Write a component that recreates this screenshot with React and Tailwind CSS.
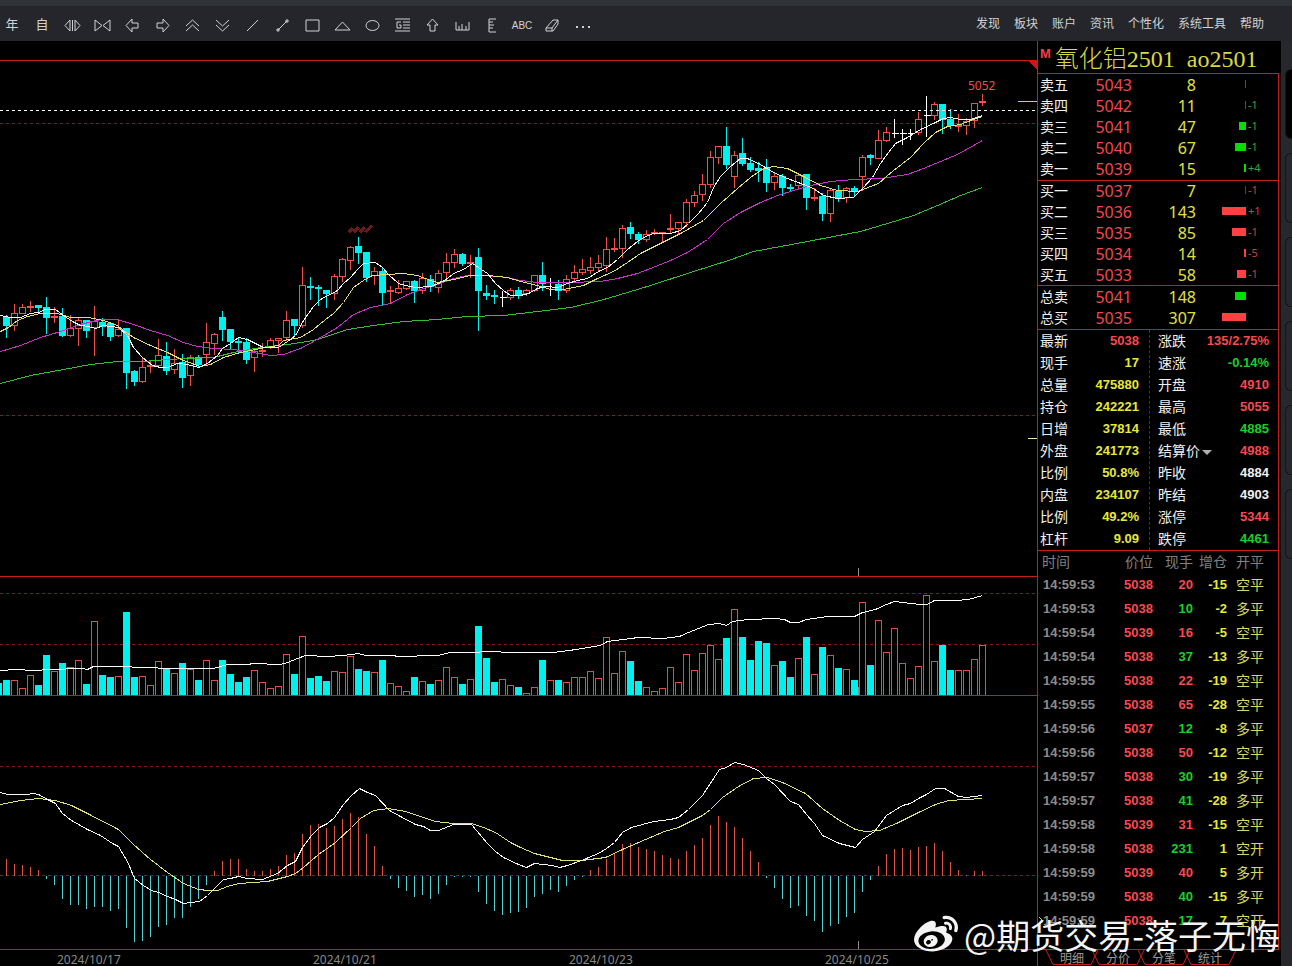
import React from 'react';
import { FaWeibo } from 'react-icons/fa';

// [kind, high, bodyTop, bodyBottom, low, volumeTop, macdEnd]
// kind: u = up (hollow), d = down (filled), w = flat (cross)
const BARS = [
  ['d', 314, 317, 325, 337, 680, 858], ['u', 303, 313, 325, 330, 680, 863],
  ['u', 303, 307, 313, 313, 688, 864], ['u', 300, 306, 307, 311, 675, 866],
  ['d', 304, 305, 307, 312, 685, 869], ['d', 296, 307, 317, 333, 655, 878],
  ['u', 306, 316, 317, 322, 671, 884], ['d', 307, 316, 335, 336, 663, 898],
  ['u', 314, 328, 335, 336, 667, 904], ['u', 317, 320, 328, 345, 660, 904],
  ['d', 320, 320, 330, 337, 684, 908], ['u', 305, 321, 327, 355, 621, 906],
  ['d', 317, 322, 326, 335, 675, 906], ['d', 322, 323, 336, 340, 677, 910],
  ['u', 318, 329, 335, 336, 676, 908], ['d', 327, 328, 372, 388, 612, 927],
  ['d', 369, 371, 381, 385, 677, 941], ['u', 357, 367, 381, 382, 676, 940],
  ['u', 360, 365, 366, 372, 685, 936], ['u', 338, 355, 365, 367, 661, 926],
  ['d', 341, 356, 370, 374, 668, 924], ['u', 348, 363, 369, 373, 673, 917],
  ['d', 353, 362, 377, 387, 663, 917], ['u', 354, 357, 375, 385, 669, 906],
  ['d', 354, 357, 364, 367, 680, 898], ['u', 322, 342, 354, 365, 660, 884],
  ['u', 332, 334, 343, 354, 680, 870], ['d', 310, 317, 329, 340, 660, 860],
  ['d', 329, 329, 341, 349, 674, 858], ['d', 337, 341, 342, 353, 682, 858],
  ['d', 337, 342, 359, 363, 677, 868], ['u', 349, 351, 357, 371, 670, 870],
  ['u', 342, 350, 351, 356, 682, 870], ['u', 337, 340, 347, 348, 688, 868],
  ['u', 337, 338, 340, 352, 686, 865], ['u', 310, 320, 337, 340, 654, 854],
  ['d', 319, 319, 325, 335, 674, 852], ['u', 266, 285, 325, 327, 636, 833],
  ['d', 276, 286, 287, 299, 678, 824], ['d', 284, 287, 288, 305, 676, 823],
  ['d', 289, 290, 293, 307, 681, 827], ['u', 273, 276, 293, 299, 671, 825],
  ['u', 257, 259, 276, 281, 672, 818], ['u', 245, 247, 260, 269, 656, 812],
  ['d', 236, 246, 252, 263, 669, 816], ['d', 252, 252, 277, 281, 671, 833],
  ['u', 266, 271, 275, 284, 672, 845], ['d', 267, 271, 292, 305, 660, 865],
  ['u', 285, 290, 291, 302, 683, 878], ['u', 279, 288, 292, 293, 686, 887],
  ['u', 281, 281, 288, 289, 691, 890], ['d', 279, 281, 290, 302, 677, 896],
  ['u', 272, 278, 290, 293, 681, 894], ['d', 274, 279, 286, 291, 684, 898],
  ['u', 269, 273, 287, 292, 680, 893], ['u', 252, 262, 272, 277, 667, 884],
  ['u', 248, 254, 262, 267, 677, 876], ['d', 252, 254, 263, 265, 684, 876],
  ['u', 254, 262, 263, 277, 679, 876], ['d', 247, 257, 290, 330, 626, 891],
  ['d', 284, 293, 295, 299, 658, 903], ['d', 289, 295, 296, 303, 682, 910],
  ['w', 290, 297, 297, 306, 679, 914], ['u', 287, 290, 297, 299, 685, 912],
  ['d', 286, 290, 294, 298, 687, 911], ['u', 288, 290, 293, 295, 693, 907],
  ['u', 275, 275, 290, 291, 687, 896], ['d', 261, 275, 283, 290, 660, 893],
  ['w', 277, 282, 282, 295, 680, 889], ['d', 279, 284, 290, 299, 680, 891],
  ['u', 274, 279, 290, 292, 682, 885], ['u', 264, 272, 278, 282, 677, 879],
  ['u', 258, 269, 272, 274, 677, 876], ['u', 256, 267, 270, 273, 671, 869],
  ['u', 254, 263, 267, 271, 678, 866], ['u', 236, 249, 265, 271, 637, 858],
  ['u', 237, 248, 249, 251, 673, 853], ['u', 224, 228, 248, 257, 651, 843],
  ['d', 221, 227, 233, 238, 661, 842], ['d', 231, 234, 239, 243, 681, 846],
  ['u', 229, 234, 239, 241, 687, 848], ['u', 228, 232, 233, 234, 691, 850],
  ['u', 232, 232, 233, 242, 688, 854], ['u', 213, 228, 229, 233, 667, 857],
  ['u', 221, 222, 228, 234, 682, 858], ['u', 198, 202, 222, 226, 654, 850],
  ['u', 190, 195, 202, 206, 670, 844], ['u', 173, 184, 194, 200, 653, 837],
  ['u', 150, 157, 184, 187, 645, 824], ['u', 145, 146, 157, 163, 659, 815],
  ['d', 126, 146, 164, 168, 638, 821], ['u', 150, 155, 176, 187, 609, 826],
  ['d', 137, 153, 163, 165, 637, 837], ['d', 156, 163, 169, 171, 660, 850],
  ['d', 161, 168, 170, 181, 641, 861], ['d', 158, 168, 182, 191, 643, 877],
  ['u', 172, 176, 182, 189, 665, 887], ['d', 173, 176, 187, 195, 661, 898],
  ['d', 183, 187, 188, 191, 677, 907], ['u', 172, 175, 185, 187, 658, 905],
  ['d', 174, 174, 197, 209, 637, 915], ['u', 187, 197, 198, 200, 674, 920],
  ['d', 192, 196, 213, 220, 647, 931], ['u', 187, 190, 213, 221, 655, 925],
  ['d', 184, 191, 198, 201, 668, 923], ['u', 186, 188, 197, 202, 669, 916],
  ['d', 185, 188, 191, 196, 680, 912], ['u', 154, 157, 176, 190, 602, 891],
  ['d', 153, 155, 157, 164, 665, 879], ['u', 129, 140, 158, 158, 620, 865],
  ['u', 126, 132, 140, 141, 652, 853], ['w', 118, 133, 133, 137, 628, 848],
  ['w', 128, 133, 133, 144, 663, 847], ['w', 128, 133, 133, 139, 678, 849],
  ['u', 111, 119, 132, 134, 666, 846], ['w', 95, 115, 115, 136, 595, 845],
  ['u', 101, 104, 115, 119, 661, 842], ['d', 103, 104, 119, 133, 645, 850],
  ['d', 108, 119, 125, 128, 670, 861], ['u', 113, 125, 126, 131, 670, 869],
  ['u', 117, 121, 125, 134, 670, 874], ['u', 102, 103, 120, 127, 659, 870],
  ['u', 93, 101, 102, 105, 645, 870],
];

const MA5 = '0,315 10,317 20,317 30,313 38,312 45,309 55,309 63,315 72,321 80,325 88,326 95,328 103,325 118,327 127,335 133,347 142,357 152,365 160,367 167,367 177,363 187,364 198,367 207,363 217,355 222,348 230,343 238,337 247,339 255,343 263,347 278,347 287,341 295,335 303,320 313,306 320,299 337,290 343,283 350,277 357,269 363,263 375,262 382,267 388,274 398,283 405,285 415,287 430,286 438,283 447,278 453,273 463,269 472,263 478,267 487,273 495,283 503,290 510,295 520,295 528,293 537,288 545,286 557,287 567,283 577,280 587,278 598,271 607,267 617,259 627,249 637,241 643,237 653,233 670,233 680,230 688,223 698,213 707,202 713,187 720,176 730,166 740,158 747,158 760,164 773,172 787,178 803,184 813,188 823,195 837,198 853,197 862,188 872,177 880,163 888,152 895,143 907,137 920,129 933,123 943,118 950,117 960,119 970,119 982,115';
const MA10 = '0,331 8,327 17,320 27,316 40,313 57,313 70,317 88,317 103,320 117,325 123,330 133,337 150,345 167,352 183,360 200,366 210,364 223,357 240,352 260,348 278,345 283,340 300,337 313,329 320,323 333,313 343,302 353,287 363,280 372,275 387,274 403,273 417,275 430,280 437,282 453,279 470,275 487,275 507,277 520,281 537,285 550,289 563,289 583,285 597,278 613,271 627,262 640,253 660,243 680,233 703,220 720,203 737,188 750,177 763,168 773,166 787,168 803,176 820,185 837,190 857,191 878,183 893,170 910,157 923,143 935,132 947,126 960,124 973,119 982,116';
const MA20 = '0,351 20,345 40,337 60,331 80,324 100,319 117,319 133,324 150,330 167,335 183,342 197,346 213,348 233,349 253,352 270,355 283,354 300,348 313,341 320,337 337,327 353,314 370,307 390,303 407,294 423,288 440,283 453,278 467,275 483,275 507,277 520,280 537,282 567,282 600,281 617,278 637,273 650,268 670,260 687,252 707,239 723,223 740,212 760,202 777,195 793,190 810,185 830,181 853,179 880,178 907,174 923,168 940,161 957,154 982,140';
const MA60 = '0,383 30,375 63,369 90,364 117,361 143,361 167,359 187,358 213,357 233,352 260,347 287,344 313,340 320,338 347,329 373,325 403,321 437,319 467,316 503,315 537,311 570,307 600,300 627,292 650,285 690,272 728,260 753,251 780,246 807,241 833,236 860,231 887,223 913,215 937,205 960,195 982,187';
const OPEN_INTEREST = '0,670 15,669 33,670 50,669 82,668 87,669 93,666 130,666 133,667 157,667 158,668 213,668 220,666 227,664 247,664 253,663 280,664 287,662 297,658 305,655 327,656 343,655 358,653 365,655 393,655 397,656 413,656 420,655 437,655 450,652 467,652 493,651 507,652 552,652 569,650 600,645 607,641 638,637 662,638 679,636 688,632 708,624 719,623 726,625 732,621 748,619 775,618 784,619 790,622 798,622 806,619 827,616 854,616 862,612 875,609 886,604 894,601 911,603 920,604 927,604 934,600 955,600 968,599 982,595';
const DIF = '0,792 7,794 27,794 32,793 38,794 47,799 55,803 62,813 71,820 78,824 87,829 100,835 112,843 118,846 127,861 134,878 143,885 151,890 158,892 167,896 175,899 183,903 191,902 199,901 207,895 215,887 223,879 230,878 238,876 247,878 262,879 277,873 287,865 295,861 302,847 311,835 319,827 327,823 334,817 343,804 351,795 359,788 367,792 375,795 389,810 400,816 415,824 423,826 430,830 438,830 453,824 471,824 487,843 495,851 503,857 518,864 526,867 534,863 552,865 559,867 567,865 581,860 598,853 606,848 614,842 622,832 631,827 653,821 670,819 678,817 688,809 702,795 719,769 726,767 734,762 743,764 758,770 766,778 774,784 790,801 798,804 806,814 814,823 822,835 839,843 855,847 862,839 874,831 886,815 894,810 902,805 910,803 918,798 926,794 935,788 944,788 958,796 966,797 973,796 982,795';
const DEA = '0,804 20,800 38,798 55,800 71,805 87,813 118,829 133,844 150,859 167,872 183,883 198,889 208,890 217,890 227,886 238,883 267,881 287,876 295,873 303,867 318,854 335,842 351,827 360,818 373,810 388,808 405,811 423,817 435,821 453,823 471,823 483,827 495,832 510,842 520,847 534,853 562,860 581,860 605,857 622,849 645,839 664,831 678,827 702,815 710,809 722,797 738,786 753,778 767,777 782,782 805,793 822,808 839,820 855,829 865,831 879,830 896,823 918,812 935,804 948,800 982,798';

const COLORS = { u: '#f05048', d: '#00f0f0', w: '#ffffff' };
const barX = (i) => 6 + i * 8;

const TOOLS = [
  { name: '年线', text: '年' },
  { name: '自定义', text: '自' },
  { name: '拉伸', d: 'M6 3 1 8.500l5 5.500zM8.500 3v11M11 3l5 5.500-5 5.500z' },
  { name: '压缩', d: 'M1 3v11l7-5.500zM16 3v11L9 8.500z' },
  { name: '左移', d: 'M8 2 2 8.500 8 15v-4h6V6H8z' },
  { name: '右移', d: 'M9 2l6 6.500L9 15v-4H3V6h6z' },
  { name: '上翻', d: 'M2 9l6.500-6L15 9M2 14l6.500-6 6.500 6' },
  { name: '下翻', d: 'M2 3l6.500 6L15 3M2 8l6.500 6L15 8' },
  { name: '直线', d: 'M3 14 14 3' },
  { name: '线段', d: 'M4 13 13 4M3 12h2v2H3zM12 3h2v2h-2z' },
  { name: '矩形', d: 'M2 3h13v11H2z' },
  { name: '三角形', d: 'M1 13h15L8.500 5z' },
  { name: '椭圆', d: 'M2 8.500a6.500 5 0 1 0 13 0a6.500 5 0 1 0-13 0' },
  { name: '黄金分割', d: 'M1 2h15M9 5h7M9 8h7M9 11h7M1 14h15M7 5H3v6h4V8H5' },
  { name: '向上箭头', d: 'M8.500 2 3 8h3v6h5V8h3z' },
  { name: '周期尺', d: 'M2 5v8h13V5M5 9v4M8 7v6M12 9v4' },
  { name: '价格尺', d: 'M12 2H5v13h7M5 5h4M5 8h5M5 11h4' },
  { name: '文字', text: 'ABC' },
  { name: '橡皮擦', d: 'M2 11 9 3h5l-6 8zM2 11v3h7l5-7V3M8 11v3' },
  { name: '更多', text: '…' },
];

const MENUS = ['发现', '板块', '账户', '资讯', '个性化', '系统工具', '帮助'];

const SELLS = [
  { label: '卖五', price: 5043, qty: 8, bar: 1, diff: '' },
  { label: '卖四', price: 5042, qty: 11, bar: 1, diff: '-1' },
  { label: '卖三', price: 5041, qty: 47, bar: 7, diff: '-1' },
  { label: '卖二', price: 5040, qty: 67, bar: 11, diff: '-1' },
  { label: '卖一', price: 5039, qty: 15, bar: 2, diff: '+4' },
];

const BUYS = [
  { label: '买一', price: 5037, qty: 7, bar: 1, diff: '-1' },
  { label: '买二', price: 5036, qty: 143, bar: 24, diff: '+1' },
  { label: '买三', price: 5035, qty: 85, bar: 14, diff: '-1' },
  { label: '买四', price: 5034, qty: 14, bar: 2, diff: '-5' },
  { label: '买五', price: 5033, qty: 58, bar: 9, diff: '-1' },
];

const TOTALS = [
  { label: '总卖', price: 5041, qty: 148, bar: 11, diff: '', side: 'sell' },
  { label: '总买', price: 5035, qty: 307, bar: 24, diff: '', side: 'buy' },
];

const STATS_LEFT = [
  ['最新', '5038', 'red'], ['现手', '17', 'yellow'], ['总量', '475880', 'yellow'],
  ['持仓', '242221', 'yellow'], ['日增', '37814', 'yellow'], ['外盘', '241773', 'yellow'],
  ['比例', '50.8%', 'yellow'], ['内盘', '234107', 'yellow'], ['比例', '49.2%', 'yellow'],
  ['杠杆', '9.09', 'yellow'],
];

const STATS_RIGHT = [
  ['涨跌', '135/2.75%', 'red'], ['速涨', '-0.14%', 'green'], ['开盘', '4910', 'red'],
  ['最高', '5055', 'red'], ['最低', '4885', 'green'], ['结算价', '4988', 'red'],
  ['昨收', '4884', 'white'], ['昨结', '4903', 'white'], ['涨停', '5344', 'red'],
  ['跌停', '4461', 'green'],
];

const TICKS = [
  ['14:59:53', 5038, 20, -15, '空平'], ['14:59:53', 5038, 10, -2, '多平'],
  ['14:59:54', 5039, 16, -5, '空平'], ['14:59:54', 5038, 37, -13, '多平'],
  ['14:59:55', 5038, 22, -19, '空平'], ['14:59:55', 5038, 65, -28, '空平'],
  ['14:59:56', 5037, 12, -8, '多平'], ['14:59:56', 5038, 50, -12, '空平'],
  ['14:59:57', 5038, 30, -19, '多平'], ['14:59:57', 5038, 41, -28, '多平'],
  ['14:59:58', 5039, 31, -15, '空平'], ['14:59:58', 5038, 231, 1, '空开'],
  ['14:59:59', 5039, 40, 5, '多开'], ['14:59:59', 5038, 40, -15, '多平'],
  ['14:59:59', 5038, 17, 7, '空开'],
];
// ticks that traded at the bid
const GREEN_TICKS = [1, 3, 6, 8, 9, 11, 13, 14];

const getTextColor = (color) => {
  switch (color) {
    case 'red': return 'text-[#f84850]';
    case 'green': return 'text-[#18d028]';
    case 'yellow': return 'text-[#e8e838]';
    default: return 'text-[#f0f0f0]';
  }
};

const Toolbar = () => (
  <header className="flex h-[41px] items-center justify-between border-t-[6px] border-[#303338] bg-[#24262b] pr-7 text-[#d0d2d4]">
    <div className="flex items-center gap-1.5 pt-1">
      {TOOLS.map((tool) => (
        <button
          key={tool.name}
          type="button"
          aria-label={tool.name}
          className="flex h-5 w-6 shrink-0 items-center justify-center"
        >
          {tool.d && (
            <svg width="17" height="17" viewBox="0 0 17 17" fill="none" stroke="currentColor">
              <path d={tool.d} />
            </svg>
          )}
          {tool.text === 'ABC' && (
            <span className="font-['Liberation_Sans','Noto_Sans_CJK_SC',sans-serif] text-[10px]">ABC</span>
          )}
          {tool.text === '…' && (
            <svg width="17" height="17" viewBox="0 0 17 17" fill="currentColor">
              <path d="M2 9h2v2H2zM8 9h2v2H8zM14 9h2v2h-2z" />
            </svg>
          )}
          {tool.text && tool.text !== 'ABC' && tool.text !== '…' && (
            <span className="pb-1 text-[13px] leading-4">{tool.text}</span>
          )}
        </button>
      ))}
    </div>
    <nav className="flex gap-3.5 pb-px text-xs">
      {MENUS.map((menu) => (
        <button key={menu} type="button" className="whitespace-nowrap">{menu}</button>
      ))}
    </nav>
  </header>
);

const GridLine = ({ y }) => (
  <line x1="-1" x2="1037" y1={y} y2={y} stroke="#8c1818" strokeDasharray="3 3" />
);

const PricePane = () => (
  <svg
    viewBox="0 41 1037 535"
    className="block h-auto w-full"
    fill="none"
    shapeRendering="crispEdges"
    role="img"
    aria-label="K线图"
  >
    <g transform="translate(.5 .5)">
      <line x1="-1" x2="1037" y1="60" y2="60" stroke="#c81c1c" />
      <path d="M1027 60h10v10z" fill="#c81818" />
      <GridLine y={123} />
      <GridLine y={415} />
      {BARS.map(([kind, high, top, bottom, low], i) => (
        <g key={i} stroke={COLORS[kind]}>
          <line x1={barX(i)} x2={barX(i)} y1={high} y2={low} />
          {kind === 'w' ? (
            <line x1={barX(i) - 3} x2={barX(i) + 4} y1={top} y2={top} />
          ) : (
            <rect
              x={barX(i) - 3}
              y={top}
              width="6"
              height={bottom - top}
              fill={kind === 'd' ? COLORS.d : '#000000'}
            />
          )}
        </g>
      ))}
      <polyline points={MA60} stroke="#30c030" />
      <polyline points={MA20} stroke="#c830c8" />
      <polyline points={MA10} stroke="#e0e078" />
      <polyline points={MA5} stroke="#f4f4f4" />
      <line x1="-1" x2="1037" y1="110" y2="110" stroke="#ffffff" strokeDasharray="3 3" />
      <path d="M1017 101h20" stroke="#d8d040" />
      <path d="M1027 438h10" stroke="#e8e8b0" />
      <path d="M858 567v9" stroke="#909090" />
      <path d="M348 232l4-4M353 232l5-5M359 232l5-5M365 232l6-7" stroke="#701818" strokeWidth="3" />
    </g>
    <text x="968" y="90" fill="#f05050" className="font-['Noto_Sans',sans-serif] text-xs">5052</text>
  </svg>
);

const VolumePane = () => (
  <svg
    viewBox="0 577 1037 118"
    className="block h-auto w-full"
    fill="none"
    shapeRendering="crispEdges"
    role="img"
    aria-label="成交量"
  >
    <g transform="translate(.5 .5)">
      <GridLine y={593} />
      <GridLine y={644} />
      <rect x="-5" y="683" width="6" height="12" fill={COLORS.d} stroke={COLORS.d} />
      {BARS.map(([kind, , , , , volume], i) => (
        <rect
          key={i}
          x={barX(i) - 3}
          y={volume}
          width="6"
          height={695 - volume}
          stroke={kind === 'd' ? COLORS.d : '#d85048'}
          fill={kind === 'd' ? COLORS.d : '#000000'}
        />
      ))}
      <path d="M858 686v9" stroke="#909090" />
      <polyline points={OPEN_INTEREST} stroke="#ffffff" />
    </g>
  </svg>
);

const MacdPane = () => (
  <svg
    viewBox="0 696 1037 253"
    className="block h-auto w-full"
    fill="none"
    shapeRendering="crispEdges"
    role="img"
    aria-label="MACD"
  >
    <g transform="translate(.5 .5)">
      <GridLine y={766} />
      <GridLine y={875} />
      {BARS.map((bar, i) => (
        <line
          key={i}
          x1={barX(i)}
          x2={barX(i)}
          y1="875"
          y2={bar[6]}
          stroke={bar[6] > 875 ? '#50d0d0' : '#e05040'}
        />
      ))}
      <polyline points={DEA} stroke="#e0e078" />
      <polyline points={DIF} stroke="#f4f4f4" />
      <path d="M858 940v9" stroke="#909090" />
    </g>
  </svg>
);

const Chart = () => (
  <main className="min-w-0 flex-1">
    <div className="border-b border-[#c81c1c]"><PricePane /></div>
    <div className="border-b border-[#c81c1c]"><VolumePane /></div>
    <div className="border-b border-[#c81c1c]"><MacdPane /></div>
    <div className="flex h-4 overflow-hidden pl-[57px] font-['Noto_Sans',sans-serif] text-xs leading-5 text-[#888888]">
      <time className="w-64">2024/10/17</time>
      <time className="w-64">2024/10/21</time>
      <time className="w-64">2024/10/23</time>
      <time>2024/10/25</time>
    </div>
  </main>
);

const BookRow = ({ row, side }) => {
  const isSell = side === 'sell';
  return (
    <tr>
      <th className="w-[42px] p-0 pl-0.5 text-left text-sm leading-5 font-normal">{row.label}</th>
      <td className="w-[52px] p-0 text-right text-[#f04850]">{row.price}</td>
      <td className="w-16 p-0 text-right text-[#e0e040]">{row.qty}</td>
      <td className="w-[50px] p-0">
        <div
          className={`mb-0.5 ml-auto h-2 ${isSell ? 'bg-[#00e000]' : 'bg-[#ff4040]'} ${row.bar < 2 ? 'opacity-60' : ''}`}
          style={{ width: row.bar }}
        />
      </td>
      <td className={`p-0 pb-0.5 pl-0.5 text-left text-[11px] leading-4 ${isSell ? 'text-[#30a838]' : 'text-[#c84048]'}`}>
        {row.diff}
      </td>
    </tr>
  );
};

const Book = ({ rows, side, className }) => (
  <div className={`border-t border-[#c81c1c] ${className}`}>
    <table className="h-full w-full table-fixed border-collapse font-['Noto_Sans','Noto_Sans_CJK_SC',sans-serif] text-base leading-5">
      <tbody>
        {rows.map((row) => (
          <BookRow key={row.label} row={row} side={side || row.side} />
        ))}
      </tbody>
    </table>
  </div>
);

const StatList = ({ items, className }) => (
  <dl className={className}>
    {items.map(([label, value, color], i) => (
      <div key={i} className="flex h-[22px] items-center justify-between">
        <dt className="flex items-center pb-0.5 text-sm leading-5 font-normal">
          {label}
          {label === '结算价' && (
            <svg width="10" height="5" viewBox="0 0 10 5" className="mt-1 ml-0.5" fill="#b0b0b0">
              <path d="M0 0h10L5 5z" />
            </svg>
          )}
        </dt>
        <dd className={`font-['Liberation_Sans',sans-serif] text-[13px] font-bold ${getTextColor(color)}`}>
          {value}
        </dd>
      </div>
    ))}
  </dl>
);

const TickTable = () => (
  <table className="w-full table-fixed border-collapse font-['Liberation_Sans','Noto_Sans_CJK_SC',sans-serif] text-[13px] leading-5 font-bold">
    <thead>
      <tr className="h-[22px] text-right text-sm text-[#808080]">
        <th className="w-[62px] p-0 pl-1 text-left font-normal">时间</th>
        <th className="w-[53px] p-0 font-normal">价位</th>
        <th className="w-10 p-0 font-normal">现手</th>
        <th className="w-[34px] p-0 font-normal">增仓</th>
        <th className="p-0 pl-[9px] text-left font-normal">开平</th>
      </tr>
    </thead>
    <tbody>
      {TICKS.map(([time, price, hand, change, kind], i) => (
        <tr key={i} className="h-6 text-right">
          <td className="relative p-0 pl-[5px] text-left text-[#8c8c8c]">
            {i === TICKS.length - 1 && (
              <svg width="6" height="8" viewBox="0 0 6 8" className="absolute top-2 left-0" fill="none" stroke="#e0e040">
                <path d="M1 0l4 4-4 4" />
              </svg>
            )}
            {time}
          </td>
          <td className="p-0 text-[#f84850]">{price}</td>
          <td className={`p-0 ${GREEN_TICKS.includes(i) ? 'text-[#18d028]' : 'text-[#f84850]'}`}>{hand}</td>
          <td className="p-0 text-[#e8e838]">{change}</td>
          <td className="p-0 pl-[9px] text-left text-sm font-normal text-[#d8d860]">{kind}</td>
        </tr>
      ))}
    </tbody>
  </table>
);

const Tabs = () => (
  <div className="flex h-[17px] border-t border-[#c81c1c] pl-[11px] text-xs text-[#989898]">
    {['明细', '分价', '分笔', '统计'].map((tab) => (
      <button key={tab} type="button" className="relative w-[46px] leading-4">
        <svg
          width="54"
          height="16"
          viewBox="0 0 54 16"
          className="absolute top-0 -left-1"
          fill="none"
          stroke="#c81c1c"
        >
          <path d="M1 0l7 14.500h38L53 0" />
        </svg>
        {tab}
      </button>
    ))}
  </div>
);

const QuotePanel = () => (
  <aside className="mr-0.5 flex w-[242px] shrink-0 flex-col border-l border-[#c81c1c]">
    <h1 className="flex h-8 items-center gap-1 pl-0.5 whitespace-nowrap text-[#d8d848]">
      <span className="mb-1.5 font-['Liberation_Sans',sans-serif] text-[13px] font-bold text-[#f04048]">M</span>
      <span className="flex gap-3 pt-1 font-['Liberation_Serif','Noto_Sans_CJK_SC',serif] text-2xl leading-7 font-light">
        <span>氧化铝2501</span>
        <span>ao2501</span>
      </span>
    </h1>
    <div className="flex flex-1 flex-col border-r border-[#c81c1c]">
      <Book rows={SELLS} side="sell" className="h-[107px]" />
      <Book rows={BUYS} side="buy" className="h-[105px]" />
      <Book rows={TOTALS} className="h-11" />
      <div className="flex border-y border-[#c81c1c]">
        <StatList items={STATS_LEFT} className="w-28 border-r border-dashed border-[#8c1818] pr-2.5 pl-0.5" />
        <StatList items={STATS_RIGHT} className="flex-1 pr-[9px] pl-2" />
      </div>
      <TickTable />
    </div>
    <Tabs />
  </aside>
);

const SideTabs = () => (
  <nav className="flex w-[11px] shrink-0 flex-col gap-3.5 bg-[#26282d] pt-7 pl-1">
    {['行情', '交易', '新闻', '公告', '研报', '设置'].map((name, i) => (
      <button
        key={name}
        type="button"
        aria-label={name}
        className={`h-[70px] rounded-l-md border border-r-0 border-[#15171a] ${i === 0 ? 'bg-black' : 'bg-[#26282d]'}`}
      />
    ))}
  </nav>
);

const Watermark = () => (
  <div className="pointer-events-none absolute right-3 bottom-1.5 flex items-center gap-1.5 text-[#f4f4f4]">
    <FaWeibo size={44} />
    <span className="text-[34px] leading-[50px] whitespace-nowrap">@期货交易-落子无悔</span>
  </div>
);

const App = () => (
  <div className="relative flex min-h-screen flex-col overflow-hidden bg-black font-['Noto_Sans_CJK_SC',sans-serif] text-[#f0f0f0]">
    <Toolbar />
    <div className="flex flex-1">
      <Chart />
      <QuotePanel />
      <SideTabs />
    </div>
    <Watermark />
  </div>
);

export default App;
